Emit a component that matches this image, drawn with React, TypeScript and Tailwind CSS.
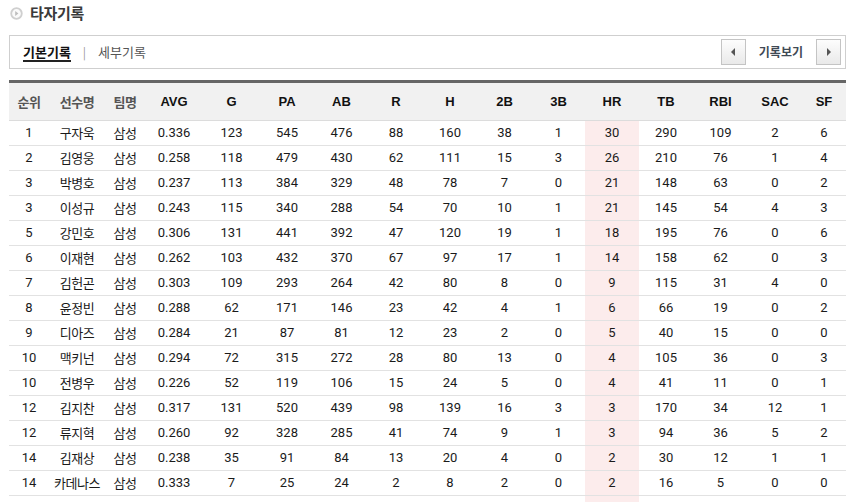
import React from "react";

const cols = [
  { label: "순위", w: "w-[40px]", kr: true },
  { label: "선수명", w: "w-[56px]", kr: true },
  { label: "팀명", w: "w-[40px]", kr: true },
  { label: "AVG", w: "w-[58px]" },
  { label: "G", w: "w-[57px]" },
  { label: "PA", w: "w-[54px]" },
  { label: "AB", w: "w-[55px]" },
  { label: "R", w: "w-[54px]" },
  { label: "H", w: "w-[54px]" },
  { label: "2B", w: "w-[55px]" },
  { label: "3B", w: "w-[53px]" },
  { label: "HR", w: "w-[54px]" },
  { label: "TB", w: "w-[54px]" },
  { label: "RBI", w: "w-[55px]" },
  { label: "SAC", w: "w-[54px]" },
  { label: "SF", w: "w-[44px]" },
];

const rows = [
  "1 구자욱 삼성 0.336 123 545 476 88 160 38 1 30 290 109 2 6",
  "2 김영웅 삼성 0.258 118 479 430 62 111 15 3 26 210 76 1 4",
  "3 박병호 삼성 0.237 113 384 329 48 78 7 0 21 148 63 0 2",
  "3 이성규 삼성 0.243 115 340 288 54 70 10 1 21 145 54 4 3",
  "5 강민호 삼성 0.306 131 441 392 47 120 19 1 18 195 76 0 6",
  "6 이재현 삼성 0.262 103 432 370 67 97 17 1 14 158 62 0 3",
  "7 김헌곤 삼성 0.303 109 293 264 42 80 8 0 9 115 31 4 0",
  "8 윤정빈 삼성 0.288 62 171 146 23 42 4 1 6 66 19 0 2",
  "9 디아즈 삼성 0.284 21 87 81 12 23 2 0 5 40 15 0 0",
  "10 맥키넌 삼성 0.294 72 315 272 28 80 13 0 4 105 36 0 3",
  "10 전병우 삼성 0.226 52 119 106 15 24 5 0 4 41 11 0 1",
  "12 김지찬 삼성 0.317 131 520 439 98 139 16 3 3 170 34 12 1",
  "12 류지혁 삼성 0.260 92 328 285 41 74 9 1 3 94 36 5 2",
  "14 김재상 삼성 0.238 35 91 84 13 20 4 0 2 30 12 1 1",
  "14 카데나스 삼성 0.333 7 25 24 2 8 2 0 2 16 5 0 0",
].map((r) => r.split(" "));

const NavButton = ({ dir }: { dir: "left" | "right" }) => (
  <button className="w-[25px] h-[26px] border border-[#c4c4c4] bg-gradient-to-b from-[#fdfdfd] to-[#e9e9e9] flex items-center justify-center">
    <svg width="6" height="8" viewBox="0 0 6 8">
      {dir === "left" ? <path d="M5 0 L1 4 L5 8 Z" fill="#555" /> : <path d="M1 0 L5 4 L1 8 Z" fill="#555" />}
    </svg>
  </button>
);

export default function App() {
  return (
    <div className="w-[856px] h-[502px] overflow-hidden bg-white pl-[9px] pr-[10px] font-['Roboto','Noto_Sans_CJK_KR',sans-serif] text-[#1a1a1a]">
      <div className="flex items-center gap-[7px] h-[27px] pl-[1px]">
        <svg width="13" height="13" viewBox="0 0 13 13">
          <circle cx="6.5" cy="6.5" r="5.3" fill="#fafafa" stroke="#cfcfcf" strokeWidth="1.8" />
          <path d="M5.2 4 L8.4 6.5 L5.2 9 Z" fill="#bdbdbd" />
        </svg>
        <h1 className="text-[15px] font-bold text-[#3a3a3a] font-['Noto_Sans_CJK_KR',sans-serif] tracking-[-0.3px]">타자기록</h1>
      </div>

      <div className="mt-[8px] h-[34px] border border-[#cfcfcf] flex items-center justify-between pl-[13px] pr-[4px]">
        <div className="flex items-center text-[13px] font-['Noto_Sans_CJK_KR',sans-serif]">
          <span className="font-bold text-[#111] border-b-2 border-[#222] leading-[16px] pt-[1px]">기본기록</span>
          <span className="ml-[12px] mr-[12px] text-[#999] text-[12px]">|</span>
          <span className="text-[#555]">세부기록</span>
        </div>
        <div className="flex items-center">
          <NavButton dir="left" />
          <span className="mx-[13px] text-[12px] font-bold text-[#3f4a55] font-['Noto_Sans_CJK_KR',sans-serif]">기록보기</span>
          <NavButton dir="right" />
        </div>
      </div>

      <table className="mt-[11px] w-[837px] table-fixed border-collapse border-t-[3px] border-[#666] text-[13px]">
        <colgroup>
          {cols.map((c) => (
            <col key={c.label} className={c.w} />
          ))}
        </colgroup>
        <thead>
          <tr className="bg-[#f1f1f1] h-[39px] border-b border-[#dcdcdc]">
            {cols.map((c) => (
              <th
                key={c.label}
                className={
                  c.kr
                    ? "font-bold text-[#555] text-[13px] font-['Noto_Sans_CJK_KR',sans-serif] tracking-[-0.5px]"
                    : "font-bold text-[#111] text-[13px] font-['Liberation_Sans',sans-serif]"
                }
              >
                {c.label}
              </th>
            ))}
          </tr>
        </thead>
        <tbody>
          {rows.map((r, i) => (
            <tr key={i} className="h-[25px] border-b border-[#e2e2e2]">
              {r.map((v, j) => (
                <td
                  key={j}
                  className={
                    "text-center p-0 leading-[24px]" +
                    (j === 11 ? " bg-[#fcecec]" : "") +
                    (j === 1 || j === 2 ? " font-['Noto_Sans_CJK_KR',sans-serif] tracking-[-0.5px]" : "")
                  }
                >
                  {v}
                </td>
              ))}
            </tr>
          ))}
          <tr className="h-[10px]">
            {cols.map((c, j) => (
              <td key={c.label} className={j === 11 ? "bg-[#fcecec]" : ""} />
            ))}
          </tr>
        </tbody>
      </table>
    </div>
  );
}
